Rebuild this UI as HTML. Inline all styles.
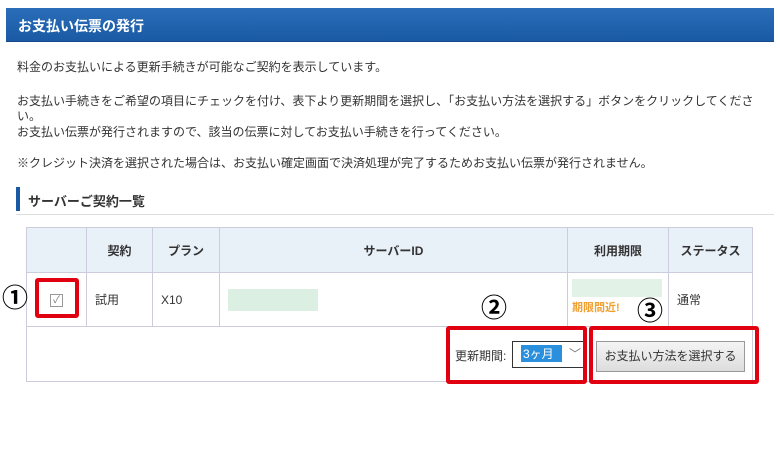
<!DOCTYPE html>
<html><head><meta charset="utf-8"><style>
*{margin:0;padding:0;box-sizing:border-box}
body{width:780px;height:460px;background:#fff;font-family:"Liberation Sans","Noto Sans CJK JP",sans-serif;font-size:12px;color:#333;position:relative;overflow:hidden}
.a{position:absolute;white-space:nowrap}
.hd{left:6px;top:8px;width:768px;height:34px;background:linear-gradient(#2a6db8,#1a5aa5);border-bottom:1px solid #144a8a}
.hd span{position:absolute;left:12px;top:8px;color:#fff;font-weight:bold;font-size:14px}
table{position:absolute;left:26px;top:227px;border-collapse:collapse;width:727px}
td,th{border:1px solid #ccd;font-size:12px}
th{background:#e8f0f8;height:45px;font-weight:bold;color:#333}
td{height:54px;padding-left:8px}
.red{position:absolute;border:4px solid #e00010;border-radius:3px}
.num{position:absolute;font-size:26px;font-weight:bold;color:#000;line-height:26px}
</style></head><body>
<div class="a hd"><span>お支払い伝票の発行</span></div>
<div class="a" style="left:17px;top:58px">料金のお支払いによる更新手続きが可能なご契約を表示しています。</div>
<div class="a" style="left:17px;top:92px">お支払い手続きをご希望の項目にチェックを付け、表下より更新期間を選択し、「お支払い方法を選択する」ボタンをクリックしてくださ</div>
<div class="a" style="left:17px;top:107px">い。</div>
<div class="a" style="left:17px;top:123px">お支払い伝票が発行されますので、該当の伝票に対してお支払い手続きを行ってください。</div>
<div class="a" style="left:17px;top:154px">※クレジット決済を選択された場合は、お支払い確定画面で決済処理が完了するためお支払い伝票が発行されません。</div>
<div class="a" style="left:16px;top:187px;width:4px;height:24px;background:#1a5aa5"></div>
<div class="a" style="left:28px;top:191px;font-weight:bold;font-size:13px">サーバーご契約一覧</div>
<div class="a" style="left:16px;top:214px;width:758px;height:1px;background:#ddd"></div>
<table>
<tr><th style="width:60px"></th><th style="width:66px">契約</th><th style="width:67px">プラン</th><th style="width:348px">サーバーID</th><th style="width:101px">利用期限</th><th>ステータス</th></tr>
<tr><td style="text-align:center;padding:0"><span style="display:inline-block;width:13px;height:13px;border:1px solid #999;font-size:10px;line-height:11px;color:#777">✓</span></td><td>試用</td><td>X10</td><td><div style="width:90px;height:22px;background:#dcefe3"></div></td><td style="vertical-align:top;padding-top:6px;padding-left:4px"><div style="width:90px;height:18px;background:#e3f2e6"></div><div style="color:#f0a030;font-weight:bold;font-size:11px;margin-top:2px">期限間近!</div></td><td style="vertical-align:top;padding-top:18px">通常</td></tr>
<tr><td colspan="6" style="height:55px"></td></tr>
</table>
<div class="a" style="left:455px;top:347px">更新期間:</div>
<div class="a" style="left:512px;top:341px;width:72px;height:27px;border:1px solid #333;background:#fff"><span style="position:absolute;left:8px;top:3px;width:41px;height:17px;background:#2a8fdc;color:#fff;padding-left:2px">3ヶ月</span><span style="position:absolute;left:56px;top:3px;color:#777">﹀</span></div>
<div class="a" style="left:596px;top:341px;width:149px;height:31px;border:1px solid #999;background:linear-gradient(#f4f4f4,#ddd);text-align:center;line-height:29px;font-size:12px">お支払い方法を選択する</div>
<div class="red" style="left:35px;top:278px;width:44px;height:40px"></div>
<div class="red" style="left:446px;top:326px;width:141px;height:58px"></div>
<div class="red" style="left:589px;top:326px;width:170px;height:58px"></div>
<div class="num" style="left:2px;top:285px">①</div>
<div class="num" style="left:481px;top:295px">②</div>
<div class="num" style="left:637px;top:298px">③</div>
</body></html>
